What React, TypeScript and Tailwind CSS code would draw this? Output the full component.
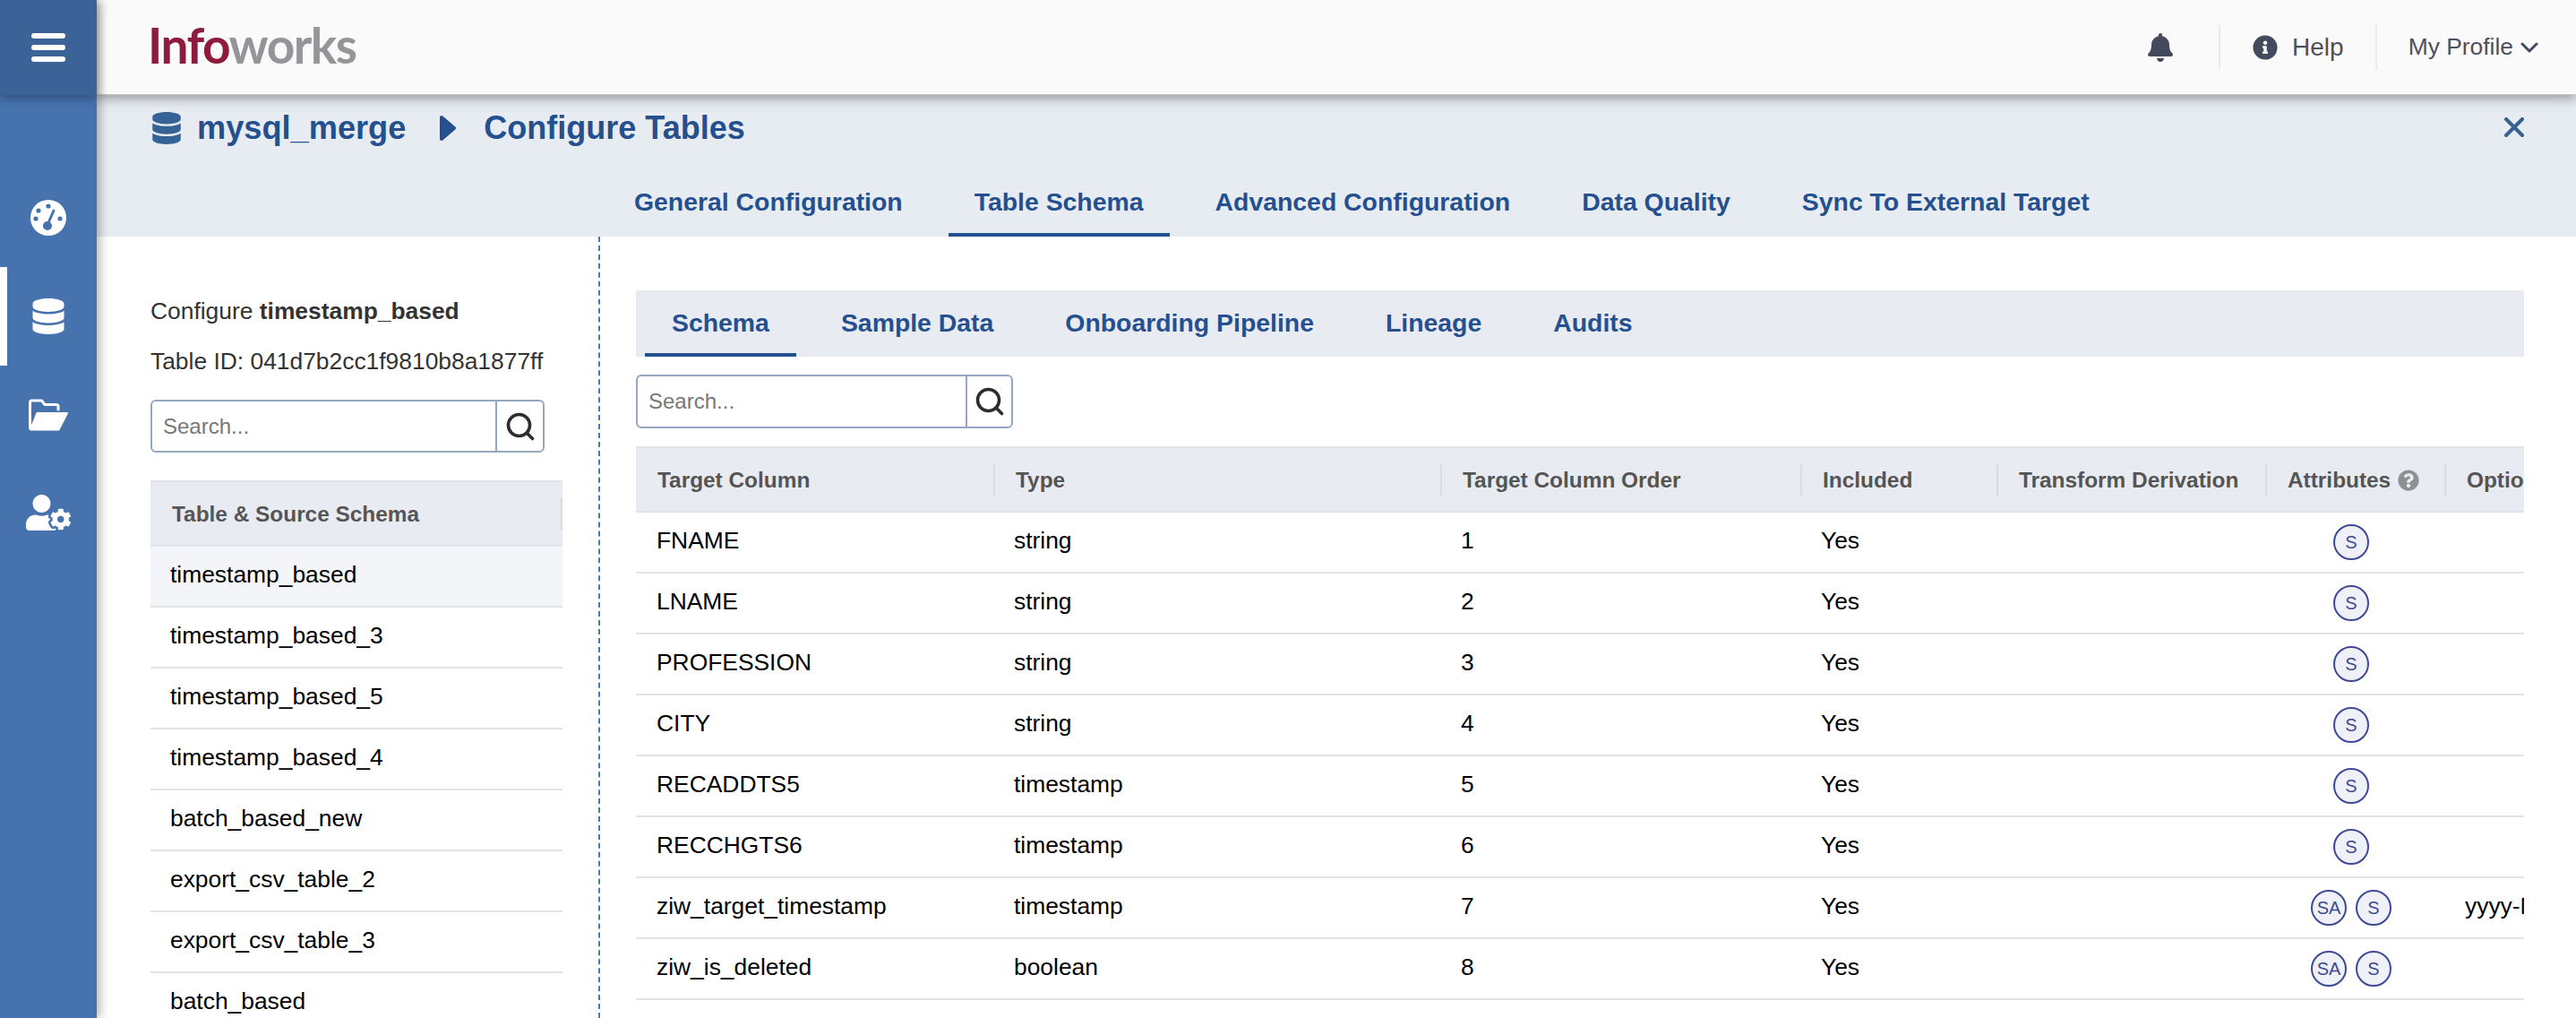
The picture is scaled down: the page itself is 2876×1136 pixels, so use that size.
import React from 'react';
import { FaBell, FaDatabase, FaInfoCircle, FaQuestionCircle, FaUserCog } from 'react-icons/fa';
import { Search } from 'lucide-react';

const mainTabs = ['General Configuration', 'Table Schema', 'Advanced Configuration', 'Data Quality', 'Sync To External Target'];
const subTabs = ['Schema', 'Sample Data', 'Onboarding Pipeline', 'Lineage', 'Audits'];
const tables = [
  'timestamp_based',
  'timestamp_based_3',
  'timestamp_based_5',
  'timestamp_based_4',
  'batch_based_new',
  'export_csv_table_2',
  'export_csv_table_3',
  'batch_based',
];
const columns = [
  { name: 'FNAME', type: 'string', attrs: ['S'] },
  { name: 'LNAME', type: 'string', attrs: ['S'] },
  { name: 'PROFESSION', type: 'string', attrs: ['S'] },
  { name: 'CITY', type: 'string', attrs: ['S'] },
  { name: 'RECADDTS5', type: 'timestamp', attrs: ['S'] },
  { name: 'RECCHGTS6', type: 'timestamp', attrs: ['S'] },
  { name: 'ziw_target_timestamp', type: 'timestamp', attrs: ['SA', 'S'], options: 'yyyy-MM-dd HH:mm:ss' },
  { name: 'ziw_is_deleted', type: 'boolean', attrs: ['SA', 'S'] },
];

const gridCols = 'grid grid-cols-[399px_499px_402px_219px_300px_200px_minmax(0,1fr)]';

const GaugeIcon = () => (
  <svg viewBox="0 0 40 40" className="w-[40px] h-[40px]">
    <circle cx="20" cy="20" r="20" fill="#fff" />
    <g fill="#4672ae">
      <circle cx="6" cy="21" r="2.6" />
      <circle cx="9" cy="12" r="2.6" />
      <circle cx="20" cy="7" r="2.6" />
      <circle cx="33" cy="21" r="2.6" />
      <circle cx="19" cy="29" r="5" />
    </g>
    <path d="M19 28 L26 12" stroke="#4672ae" strokeWidth="3" strokeLinecap="round" />
  </svg>
);

const FolderIcon = () => (
  <svg viewBox="0 0 46 36" className="w-[46px] h-[36px]">
    <path
      d="M2.5 33 V4 Q2.5 2 4.5 2 H15.5 L19 6.5 H32 Q34 6.5 34 8.5 V12"
      fill="none"
      stroke="#fff"
      strokeWidth="3"
      strokeLinecap="round"
      strokeLinejoin="round"
    />
    <path d="M10.5 16 H44 L34.5 34.5 H3 Z" fill="#fff" stroke="#fff" strokeWidth="2" strokeLinejoin="round" />
  </svg>
);

const SearchBox = ({ width, inputWidth }: { width: string; inputWidth: string }) => (
  <div className={`flex items-stretch border-2 border-[#94a7c2] rounded-[6px] bg-white ${width}`}>
    <input
      readOnly
      placeholder="Search..."
      className={`${inputWidth} min-w-0 pl-[12px] text-[24px] text-[#333] placeholder:text-[#777] bg-transparent outline-none`}
    />
    <div className="flex-1 border-l-2 border-[#94a7c2] flex items-center justify-center">
      <Search size={36} strokeWidth={2.4} className="text-[#2d2d2d]" />
    </div>
  </div>
);

const Badge = ({ label }: { label: string }) => (
  <span className="w-[40px] h-[40px] rounded-full border-2 border-[#3f4a96] bg-[#f0f1f8] text-[#3f4a96] text-[20px] flex items-center justify-center">
    {label}
  </span>
);

const HeadCell = ({ first, children }: { first?: boolean; children: React.ReactNode }) => (
  <div className="flex items-center min-w-0 overflow-hidden">
    <div className={`h-[36px] flex items-center whitespace-nowrap ${first ? 'pl-[24px]' : 'pl-[23px] border-l-2 border-[#d8dbe0]'}`}>
      {children}
    </div>
  </div>
);

const App: React.FC = () => {
  return (
    <div className="flex w-[2876px] h-[1136px] overflow-hidden bg-white font-['Liberation_Sans',Arial,sans-serif]">
      {/* Side rail */}
      <aside className="relative z-20 w-[108px] shrink-0 bg-[#4672ae] shadow-[4px_0_10px_rgba(0,0,0,0.28)]">
        <div className="h-[106px] bg-[#3c6398] shadow-[0_4px_10px_rgba(0,0,0,0.3)] flex flex-col items-center justify-center gap-[7px]">
          <span className="w-[38px] h-[6px] rounded-full bg-white" />
          <span className="w-[38px] h-[6px] rounded-full bg-white" />
          <span className="w-[38px] h-[6px] rounded-full bg-white" />
        </div>
        <nav className="pt-[82px] text-white">
          <div className="h-[110px] flex items-center justify-center">
            <GaugeIcon />
          </div>
          <div className="h-[110px] flex items-center justify-center border-l-[8px] border-white pr-[8px]">
            <FaDatabase size={40} />
          </div>
          <div className="h-[110px] flex items-center justify-center">
            <FolderIcon />
          </div>
          <div className="h-[110px] flex items-center justify-center">
            <FaUserCog size={50} className="mt-[-2px]" />
          </div>
        </nav>
      </aside>

      <div className="flex-1 min-w-0 flex flex-col">
        {/* Top bar */}
        <header className="relative z-10 h-[106px] shrink-0 bg-[#fafafa] border-b border-[#c4c6ca] shadow-[0_4px_12px_rgba(0,0,0,0.35)] flex items-center pl-[57px] pr-[42px]">
          <div className="text-[55px] leading-none font-bold tracking-[-1.5px] mt-[-4px] font-['Lato',sans-serif]">
            <span className="text-[#8e1b3e]">Info</span>
            <span className="text-[#939598]">works</span>
          </div>
          <div className="ml-auto flex items-center text-[#4b5060]">
            <FaBell size={32} className="text-[#444a5e]" />
            <span className="w-[2px] h-[50px] bg-[#e8ebf0] ml-[49px]" />
            <FaInfoCircle size={28} className="text-[#444a5e] ml-[36px]" />
            <span className="text-[28px] ml-[16px]">Help</span>
            <span className="w-[2px] h-[50px] bg-[#e8ebf0] ml-[35px]" />
            <span className="text-[26.4px] ml-[35px]">My Profile</span>
            <svg viewBox="0 0 20 12" className="w-[20px] h-[12px] ml-[8px]">
              <path d="M2 2 L10 10 L18 2" fill="none" stroke="#444a5e" strokeWidth="3" strokeLinecap="round" strokeLinejoin="round" />
            </svg>
          </div>
        </header>

        {/* Title band */}
        <div className="h-[158px] shrink-0 bg-[#e7ecf2]">
          <div className="h-[74px] flex items-center pl-[60px] pr-[58px]">
            <FaDatabase size={36} className="text-[#366396]" />
            <span className="ml-[16px] text-[36.2px] font-bold text-[#25508f]">mysql_merge</span>
            <svg viewBox="0 0 20 30" className="w-[20px] h-[30px] ml-[37px]">
              <path d="M3 3 L17 15 L3 27 Z" fill="#25508f" stroke="#25508f" strokeWidth="4" strokeLinejoin="round" />
            </svg>
            <span className="ml-[30px] text-[36px] font-bold text-[#25508f]">Configure Tables</span>
            <svg viewBox="0 0 22 22" className="w-[22px] h-[22px] ml-auto mb-[3px]">
              <path d="M2 2 L20 20 M20 2 L2 20" stroke="#36608f" strokeWidth="4" strokeLinecap="round" />
            </svg>
          </div>
          <div className="h-[84px] flex items-end gap-[22px] pl-[571px]">
            {mainTabs.map((tab) => (
              <div
                key={tab}
                className={`h-[76px] px-[29px] pt-[3px] flex items-center text-[28.4px] font-bold text-[#25508f] border-b-4 ${
                  tab === 'Table Schema' ? 'border-[#25508f]' : 'border-transparent'
                }`}
              >
                {tab}
              </div>
            ))}
          </div>
        </div>

        <div className="flex-1 min-h-0 flex">
          {/* Table list */}
          <section className="w-[562px] shrink-0 border-r-2 border-dashed border-[#4f7aa8] pl-[60px] pt-[64px]">
            <p className="h-[40px] flex items-center text-[26.4px] text-[#333] whitespace-pre">
              Configure <b>timestamp_based</b>
            </p>
            <p className="h-[40px] mt-[16px] flex items-center text-[26.4px] text-[#333]">Table ID: 041d7b2cc1f9810b8a1877ff</p>
            <div className="mt-[22px]">
              <SearchBox width="w-[440px] h-[59px]" inputWidth="w-[383px]" />
            </div>
            <div className="mt-[31px] w-[460px]">
              <div className="h-[74px] pt-[2px] bg-[#e8ebf1] border-y-2 border-[#e1e4e9] flex items-center justify-between pl-[24px] text-[24.4px] font-bold text-[#555]">
                Table & Source Schema
                <span className="w-[2px] h-[36px] bg-[#d8dbe0]" />
              </div>
              {tables.map((table, i) => (
                <div
                  key={table}
                  className={`h-[68px] pb-[2px] flex items-center pl-[22px] text-[26.4px] text-black border-b-2 border-[#e3e3e3] ${
                    i === 0 ? 'bg-[#f3f5f9]' : ''
                  }`}
                >
                  {table}
                </div>
              ))}
            </div>
          </section>

          {/* Schema pane */}
          <section className="flex-1 min-w-0 pl-[40px] pr-[58px] pt-[60px]">
            <div className="h-[74px] bg-[#e8ebf1] flex items-end gap-[20px] pl-[10px]">
              {subTabs.map((tab) => (
                <div
                  key={tab}
                  className={`h-[72px] px-[30px] flex items-center text-[28.4px] font-bold text-[#25508f] border-b-4 ${
                    tab === 'Schema' ? 'border-[#25508f]' : 'border-transparent'
                  }`}
                >
                  {tab}
                </div>
              ))}
            </div>
            <div className="mt-[20px]">
              <SearchBox width="w-[421px] h-[60px]" inputWidth="w-[366px]" />
            </div>
            <div className="mt-[20px] overflow-hidden">
              <div className={`${gridCols} h-[74px] pt-[2px] bg-[#e8ebf1] border-y-2 border-[#e1e4e9] text-[24.4px] font-bold text-[#555]`}>
                <HeadCell first>Target Column</HeadCell>
                <HeadCell>Type</HeadCell>
                <HeadCell>Target Column Order</HeadCell>
                <HeadCell>Included</HeadCell>
                <HeadCell>Transform Derivation</HeadCell>
                <HeadCell>
                  Attributes
                  <FaQuestionCircle size={24} className="ml-[8px] text-[#8f9094]" />
                </HeadCell>
                <HeadCell>Options</HeadCell>
              </div>
              {columns.map((col, i) => (
                <div key={col.name} className={`${gridCols} h-[68px] items-center text-[26.4px] text-black border-b-2 border-[#e3e3e3]`}>
                  <div className="pl-[23px] pb-[2px]">{col.name}</div>
                  <div className="pl-[23px] pb-[2px]">{col.type}</div>
                  <div className="pl-[23px] pb-[2px]">{i + 1}</div>
                  <div className="pl-[23px] pb-[2px]">Yes</div>
                  <div />
                  <div className="flex justify-center gap-[10px] pr-[8px]">
                    {col.attrs.map((a) => (
                      <Badge key={a} label={a} />
                    ))}
                  </div>
                  <div className="pl-[23px] pb-[2px] whitespace-nowrap overflow-hidden">{col.options}</div>
                </div>
              ))}
            </div>
          </section>
        </div>
      </div>
    </div>
  );
};

export default App;
